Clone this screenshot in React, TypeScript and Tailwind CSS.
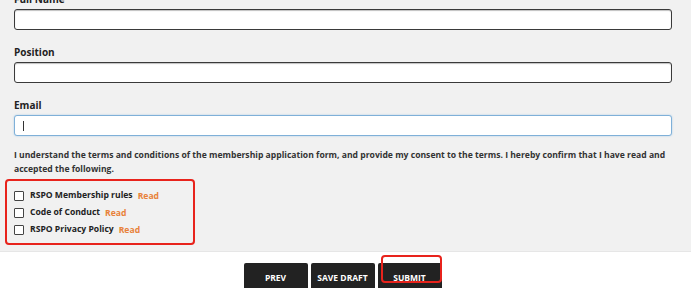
import React from "react";

const font = { fontFamily: '"Open Sans", "Liberation Sans", sans-serif' };

function Field({ label, focused }: { label: string; focused?: boolean }) {
  return (
    <div className="flex flex-col">
      <div className="h-[14px] text-[10px] leading-[14px] font-bold text-[#222]">{label}</div>
      <div
        className={
          "mt-[3px] h-[21px] w-[658px] rounded-[3px] bg-white flex items-center " +
          (focused
            ? "border border-[#7fb0d8] shadow-[0_0_2px_#a9cbe8]"
            : "border border-[#3a3a3a] shadow-[inset_0_1px_1px_rgba(0,0,0,0.25)]")
        }
      >
        {focused && <div className="ml-[8px] h-[10px] w-px bg-[#333]" />}
      </div>
    </div>
  );
}

function Check({ label }: { label: string }) {
  return (
    <div className="flex items-center h-[17px]">
      <div className="h-[10px] w-[10px] border border-[#444] bg-white rounded-[1px]" />
      <span className="ml-[6px] text-[8.6px] font-bold text-[#222]">{label}</span>
      <span className="ml-[5px] text-[8.6px] font-bold text-[#e8823a] mt-[2px]">Read</span>
    </div>
  );
}

export default function App() {
  return (
    <div className="w-[691px] h-[288px] overflow-hidden bg-white flex flex-col" style={font}>
      <div className="bg-[#f1f1f1] h-[252px] shrink-0 pl-[14px] border-b border-[#e6e6e6] flex flex-col">
        <div className="-mt-[8px] flex flex-col gap-[15px]">
          <Field label="Full Name" />
          <Field label="Position" />
          <Field label="Email" focused />
        </div>
        <p className="mt-[12px] w-[664px] text-[8.6px] leading-[14px] font-bold text-[#333]">
          I understand the terms and conditions of the membership application form, and provide my consent to the terms. I hereby confirm that I have read and accepted the following.
        </p>
        <div className="-ml-[9px] mt-[3px] w-[190px] h-[66px] border-[2.5px] border-[#e8231c] rounded-[4px] pl-[7px] pt-[6px]">
          <Check label="RSPO Membership rules" />
          <Check label="Code of Conduct" />
          <Check label="RSPO Privacy Policy" />
        </div>
      </div>
      <div className="flex justify-center gap-[3px] mt-[11px] pr-[6px]">
        <div className="w-[64px] h-[30px] shrink-0 bg-[#222] rounded-t-[2px] flex items-center justify-center text-white text-[8.5px] font-bold">PREV</div>
        <div className="w-[64px] h-[30px] shrink-0 bg-[#222] rounded-t-[2px] flex items-center justify-center text-white text-[8.5px] font-bold">SAVE DRAFT</div>
        <div className="relative w-[64px] h-[30px] shrink-0 bg-[#222] rounded-t-[2px] flex items-center justify-center text-white text-[8.5px] font-bold">
          SUBMIT
          <div className="absolute left-[3px] -top-[8px] w-[61px] h-[28px] border-[2.5px] border-[#e8231c] rounded-[4px]" />
        </div>
      </div>
    </div>
  );
}
